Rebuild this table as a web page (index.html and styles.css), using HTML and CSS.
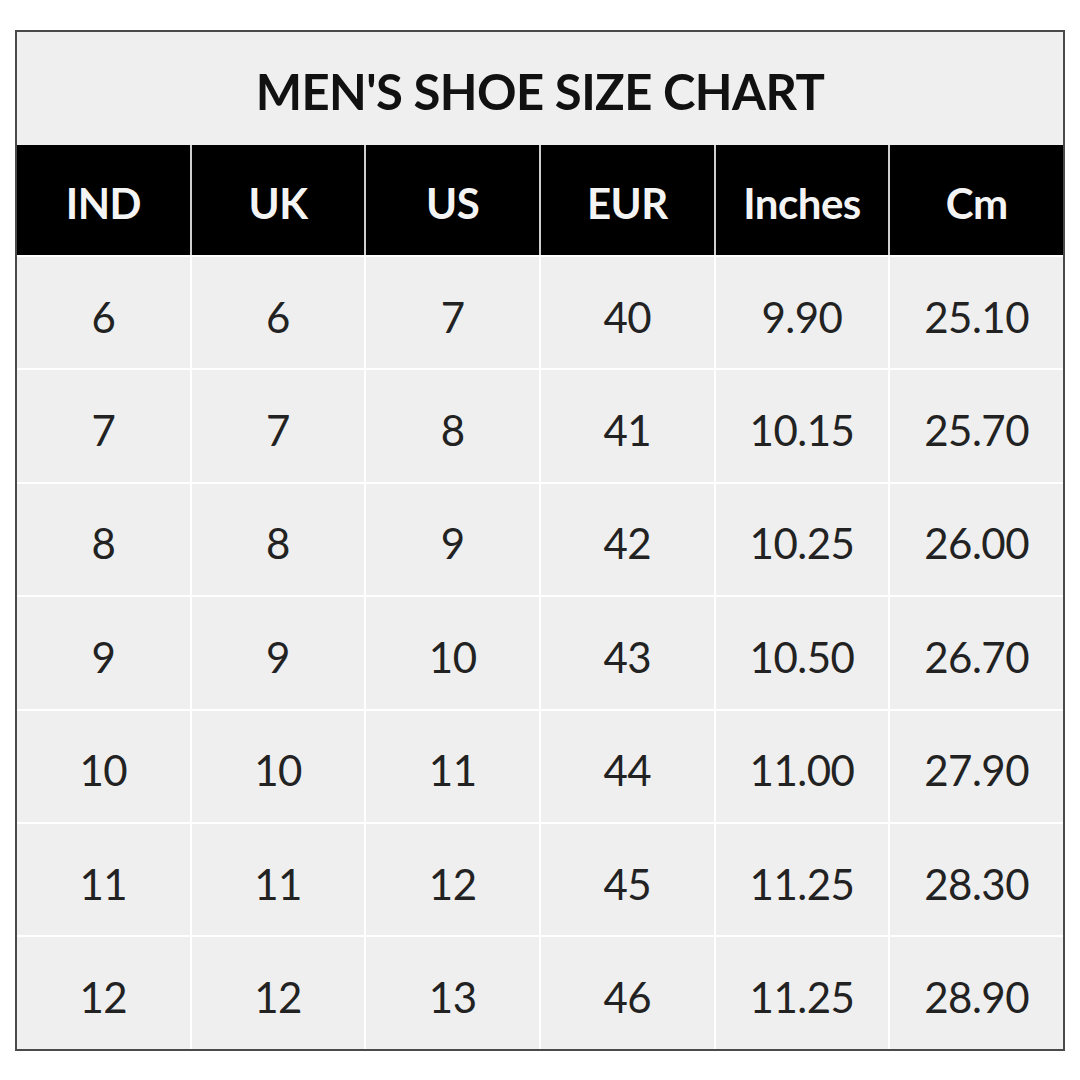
FILE: index.html
```html
<!DOCTYPE html>
<html>
<head>
<meta charset="utf-8">
<link rel="stylesheet" href="styles.css">
</head>
<body>
<div class="chart">
  <div class="title">MEN'S SHOE SIZE CHART</div>
  <div class="head">
    <div class="hcell">IND</div>
    <div class="hcell">UK</div>
    <div class="hcell">US</div>
    <div class="hcell">EUR</div>
    <div class="hcell">Inches</div>
    <div class="hcell">Cm</div>
  </div>
  <div class="body">
    <div class="cell">6</div><div class="cell">6</div><div class="cell">7</div><div class="cell">40</div><div class="cell">9.90</div><div class="cell">25.10</div>
    <div class="cell">7</div><div class="cell">7</div><div class="cell">8</div><div class="cell">41</div><div class="cell">10.15</div><div class="cell">25.70</div>
    <div class="cell">8</div><div class="cell">8</div><div class="cell">9</div><div class="cell">42</div><div class="cell">10.25</div><div class="cell">26.00</div>
    <div class="cell">9</div><div class="cell">9</div><div class="cell">10</div><div class="cell">43</div><div class="cell">10.50</div><div class="cell">26.70</div>
    <div class="cell">10</div><div class="cell">10</div><div class="cell">11</div><div class="cell">44</div><div class="cell">11.00</div><div class="cell">27.90</div>
    <div class="cell">11</div><div class="cell">11</div><div class="cell">12</div><div class="cell">45</div><div class="cell">11.25</div><div class="cell">28.30</div>
    <div class="cell">12</div><div class="cell">12</div><div class="cell">13</div><div class="cell">46</div><div class="cell">11.25</div><div class="cell">28.90</div>
  </div>
</div>
</body>
</html>
```
FILE: styles.css
```css
html, body {
  margin: 0;
  padding: 0;
  background: #ffffff;
}
body {
  font-family: Lato, "Open Sans", sans-serif;
}
.chart {
  margin: 30px 0 0 15px;
  width: 1050px;
  box-sizing: border-box;
  border: 2px solid #4a4a4a;
  background: #efefef;
}
.title {
  height: 113px;
  display: flex;
  align-items: center;
  justify-content: center;
  font-size: 49px;
  font-weight: 700;
  color: #111;
  letter-spacing: -0.6px;
  padding-top: 4px;
  box-sizing: border-box;
}
.head {
  display: grid;
  grid-template-columns: repeat(6, 1fr);
  column-gap: 2px;
  background: #cfcfcf;
  height: 110px;
}
.hcell {
  background: #000;
  color: #f4f4f4;
  font-size: 42px;
  font-weight: 700;
  display: flex;
  align-items: center;
  justify-content: center;
  letter-spacing: -0.5px;
  padding-top: 5px;
  box-sizing: border-box;
}
.body {
  display: grid;
  grid-template-columns: repeat(6, 1fr);
  grid-auto-rows: 111.4px;
  gap: 2px;
  padding-top: 2px;
  background: #ffffff;
}
.cell {
  background: #efefef;
  color: #222;
  font-size: 42px;
  font-weight: 400;
  display: flex;
  align-items: center;
  justify-content: center;
  padding-top: 8px;
  box-sizing: border-box;
  letter-spacing: -0.5px;
}
```
